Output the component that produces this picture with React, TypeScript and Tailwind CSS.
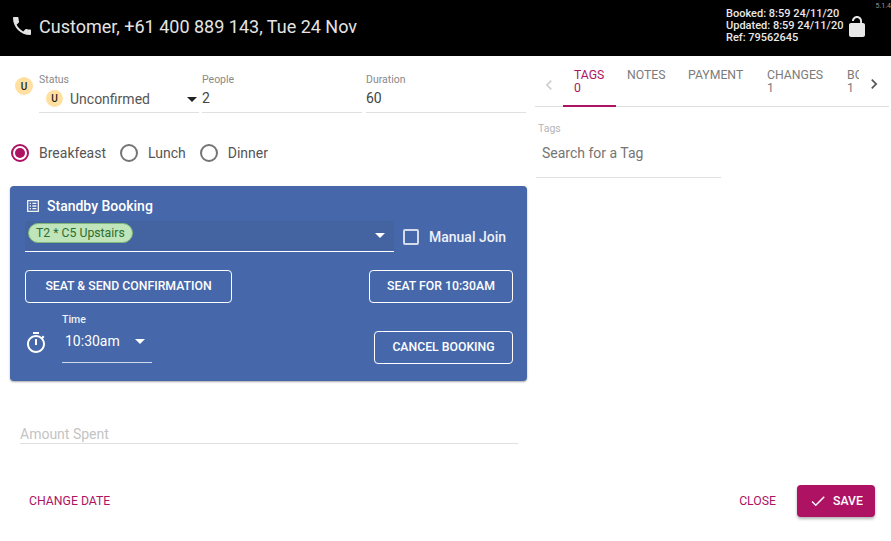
const P = {
  phone: "M6.62 10.79c1.44 2.83 3.76 5.14 6.59 6.59l2.2-2.2c.27-.27.67-.36 1.02-.24 1.12.37 2.33.57 3.57.57.55 0 1 .45 1 1V20c0 .55-.45 1-1 1-9.39 0-17-7.61-17-17 0-.55.45-1 1-1h3.5c.55 0 1 .45 1 1 0 1.25.2 2.45.57 3.57.11.35.03.74-.25 1.02l-2.2 2.2z",
  lock: "M12 17c1.1 0 2-.9 2-2s-.9-2-2-2-2 .9-2 2 .9 2 2 2zm6-9h-1V6c0-2.76-2.24-5-5-5S7 3.24 7 6h1.9c0-1.71 1.39-3.1 3.1-3.1 1.71 0 3.1 1.39 3.1 3.1v2H6c-1.1 0-2 .9-2 2v10c0 1.1.9 2 2 2h12c1.1 0 2-.9 2-2V10c0-1.1-.9-2-2-2z",
  list: "M19 5v14H5V5h14m1.1-2H3.9c-.5 0-.9.4-.9.9v16.2c0 .4.4.9.9.9h16.2c.4 0 .9-.5.9-.9V3.9c0-.5-.5-.9-.9-.9zM11 7h6v2h-6V7zm0 4h6v2h-6v-2zm0 4h6v2h-6zM7 7h2v2H7zm0 4h2v2H7zm0 4h2v2H7z",
  timer: "M15 1H9v2h6V1zm-4 13h2V8h-2v6zm8.03-6.61l1.42-1.42c-.43-.51-.9-.99-1.41-1.41l-1.42 1.42C16.07 4.74 14.12 4 12 4c-4.97 0-9 4.03-9 9s4.02 9 9 9 9-4.03 9-9c0-2.12-.74-4.07-1.97-5.61zM12 20c-3.87 0-7-3.13-7-7s3.13-7 7-7 7 3.13 7 7-3.13 7-7 7z",
  check: "M9 16.17L4.83 12l-1.41 1.41L9 19 21 7l-1.41-1.41z",
  left: "M15.41 7.41L14 6l-6 6 6 6 1.41-1.41L10.83 12z",
  right: "M10 6L8.59 7.41 13.17 12l-4.58 4.59L10 18l6-6z",
};

function Icon({ d, className }: { d: string; className: string }) {
  return (
    <svg viewBox="0 0 24 24" fill="currentColor" className={className}>
      <path d={d} />
    </svg>
  );
}

function Caret({ className }: { className: string }) {
  return <span className={`w-0 h-0 border-x-[5px] border-x-transparent border-t-[5px] ${className}`} />;
}

function Badge({ className }: { className: string }) {
  return (
    <span className={`w-[18px] h-[18px] rounded-full bg-[#ffe0a0] flex items-center justify-center text-[10px] font-medium text-[#222] ${className}`}>
      U
    </span>
  );
}

function Radio({ label, on, className }: { label: string; on?: boolean; className: string }) {
  return (
    <div className={`flex items-center text-[14px] text-[#555] ${className}`}>
      <span className={`w-[18px] h-[18px] rounded-full border-2 flex items-center justify-center shrink-0 ${on ? "border-[#ad1263]" : "border-[#757575]"}`}>
        {on && <span className="w-[10px] h-[10px] rounded-full bg-[#ad1263]" />}
      </span>
      <span>{label}</span>
    </div>
  );
}

function OutlineButton({ children, className }: { children: string; className: string }) {
  return (
    <div className={`h-[33px] rounded border border-white flex items-center justify-center text-[12.25px] font-medium text-white ${className}`}>
      {children}
    </div>
  );
}

function Tab({ title, sub, active, className }: { title: string; sub?: string; active?: boolean; className: string }) {
  return (
    <div className={`h-[48px] pt-[13px] text-[12.25px] leading-[13px] overflow-hidden whitespace-nowrap ${active ? "text-[#ad1263] border-b-2 border-[#ad1263]" : "text-[#7b7b7b]"} ${className}`}>
      <div>{title}</div>
      {sub && <div>{sub}</div>}
    </div>
  );
}

export default function App() {
  return (
    <div className="w-[891px] h-[541px] overflow-hidden bg-white flex flex-col font-['Roboto',sans-serif]">
      <header className="h-[56px] bg-black text-white flex shrink-0 relative">
        <Icon d={P.phone} className="w-[24px] h-[24px] text-[#e4e4e4] ml-[10px] mt-[14px]" />
        <div className="ml-[5px] mt-[16px] text-[18px] leading-[22px] text-[#e4e4e4]">Customer, +61 400 889 143, Tue 24 Nov</div>
        <div className="ml-auto mt-[8px] text-[11px] leading-[12px] font-medium text-[#e8e8e8] w-[119px]">
          <div>Booked: 8:59 24/11/20</div>
          <div>Updated: 8:59 24/11/20</div>
          <div>Ref: 79562645</div>
        </div>
        <Icon d={P.lock} className="w-[24px] h-[24px] text-[#e8e8e8] mt-[15px] mr-[22px]" />
        <span className="absolute top-[2px] right-0 text-[7px] leading-[8px] text-[#9a9a9a]">5.1.4</span>
      </header>

      <div className="flex flex-1 min-h-0">
        <main className="w-[535px] shrink-0 pl-[10px] flex flex-col">
          <div className="flex pt-[18px] h-[57px]">
            <Badge className="ml-[5px] mt-[3px] shrink-0" />
            <div className="ml-[6px] w-[160px] border-b border-[#e0e0e0] h-[39px]">
              <div className="text-[10.5px] leading-[12px] text-[#8a8a8a]">Status</div>
              <div className="flex items-center mt-[3px] ml-[7px]">
                <Badge className="!w-[17px] !h-[17px] -mt-[2px]" />
                <span className="ml-[7px] text-[14px] leading-[20px] text-[#555]">Unconfirmed</span>
                <Caret className="ml-auto mr-[2px] border-t-[#222]" />
              </div>
            </div>
            <div className="ml-[3px] w-[160px] border-b border-[#e0e0e0] h-[39px]">
              <div className="text-[10.5px] leading-[12px] text-[#8a8a8a]">People</div>
              <div className="mt-[2px] text-[14px] leading-[20px] text-[#444]">2</div>
            </div>
            <div className="ml-[4px] w-[160px] border-b border-[#e0e0e0] h-[39px]">
              <div className="text-[10.5px] leading-[12px] text-[#8a8a8a]">Duration</div>
              <div className="mt-[2px] text-[14px] leading-[20px] text-[#444]">60</div>
            </div>
          </div>

          <div className="flex items-center h-[24px] mt-[28px]">
            <Radio label="Breakfeast" on className="gap-[10px] ml-[1px]" />
            <Radio label="Lunch" className="gap-[10px] ml-[14px]" />
            <Radio label="Dinner" className="gap-[10px] ml-[14px]" />
          </div>

          <section className="mt-[21px] w-[517px] h-[195px] rounded bg-[#4667aa] shadow-[0_1px_2px_rgba(0,0,0,0.35)] px-[15px] pt-[11px] text-white">
            <div className="flex items-center h-[18px] text-[14px] font-medium">
              <Icon d={P.list} className="w-[16px] h-[16px] mr-[6px] text-[#f2f2f2]" />
              Standby Booking
            </div>
            <div className="flex mt-[7px]">
              <div className="w-[369px] h-[31px] bg-[#4364a0] border-b border-white flex items-center pl-[3px] pr-[9px] -mt-[1px]">
                <span className="h-[20px] px-[7px] rounded-full bg-[#c0e5bb] border border-[#7fb87a] text-[12.25px] leading-[18px] text-[#2e6e30] -mt-[6px]">T2 * C5 Upstairs</span>
                <Caret className="ml-auto border-t-white -mt-[2px]" />
              </div>
              <div className="ml-[9px] w-[16px] h-[16px] mt-[7px] rounded-[2px] border-2 border-[#d4dcec]" />
              <span className="ml-[10px] mt-[5px] text-[14px] leading-[20px] font-medium text-[#eef1f7]">Manual Join</span>
            </div>
            <div className="flex justify-between mt-[18px]">
              <OutlineButton className="w-[207px]">SEAT &amp; SEND CONFIRMATION</OutlineButton>
              <OutlineButton className="w-[144px] mr-[-1px]">SEAT FOR 10:30AM</OutlineButton>
            </div>
            <div className="flex mt-[8px]">
              <Icon d={P.timer} className="w-[24px] h-[24px] mt-[20px] text-white -ml-[1px]" />
              <div className="ml-[14px] w-[90px] h-[52px] border-b border-[#d0d9ea]">
                <div className="mt-[3px] text-[10.5px] leading-[12px] font-medium text-[#eef1f7]">Time</div>
                <div className="flex items-center mt-[5px] pl-[3px]">
                  <span className="text-[14px] leading-[20px] text-white">10:30am</span>
                  <Caret className="ml-[15px] border-t-white" />
                </div>
              </div>
              <OutlineButton className="ml-auto mt-[20px] w-[139px] mr-[-1px]">CANCEL BOOKING</OutlineButton>
            </div>
          </section>

          <div className="mt-[44px] ml-[10px] w-[498px] h-[19px] border-b border-[#e0e0e0] text-[14px] leading-[18px] text-[#c4c4c4]">Amount Spent</div>
        </main>

        <aside className="flex-1 pr-[2px]">
          <div className="h-[51px] border-b border-[#e0e0e0] flex items-start">
            <Icon d={P.left} className="w-[20px] h-[20px] mt-[19px] ml-[4px] text-[#cfcfcf] shrink-0" />
            <Tab title="TAGS" sub="0" active className="ml-[4px] w-[53px] pl-[11px] h-[51px]" />
            <Tab title="NOTES" className="ml-[11px] w-[50px]" />
            <Tab title="PAYMENT" className="ml-[11px] w-[68px]" />
            <Tab title="CHANGES" sub="1" className="ml-[11px] w-[69px]" />
            <Tab title="BOOKING" sub="1" className="ml-[11px] w-[12px]" />
            <Icon d={P.right} className="w-[20px] h-[20px] mt-[18px] ml-[5px] text-[#555] shrink-0" />
          </div>
          <div className="w-[185px] h-[71px] border-b border-[#e0e0e0] ml-[1px]">
            <div className="pt-[16px] pl-[2px] text-[10.5px] leading-[12px] text-[#b5b5b5]">Tags</div>
            <div className="mt-[8px] pl-[6px] text-[14px] leading-[20px] text-[#757575]">Search for a Tag</div>
          </div>
        </aside>
      </div>

      <footer className="h-[48px] mb-[16px] flex items-center shrink-0 text-[12.25px] font-medium text-[#ad1263]">
        <span className="ml-[29px] font-normal">CHANGE DATE</span>
        <span className="ml-auto mr-[21px] font-normal">CLOSE</span>
        <div className="w-[78px] h-[32px] mr-[16px] rounded bg-[#ad1263] text-white flex items-center justify-center gap-[6px] shadow-[0_2px_3px_rgba(0,0,0,0.3)]">
          <Icon d={P.check} className="w-[18px] h-[18px]" />
          SAVE
        </div>
      </footer>
    </div>
  );
}
